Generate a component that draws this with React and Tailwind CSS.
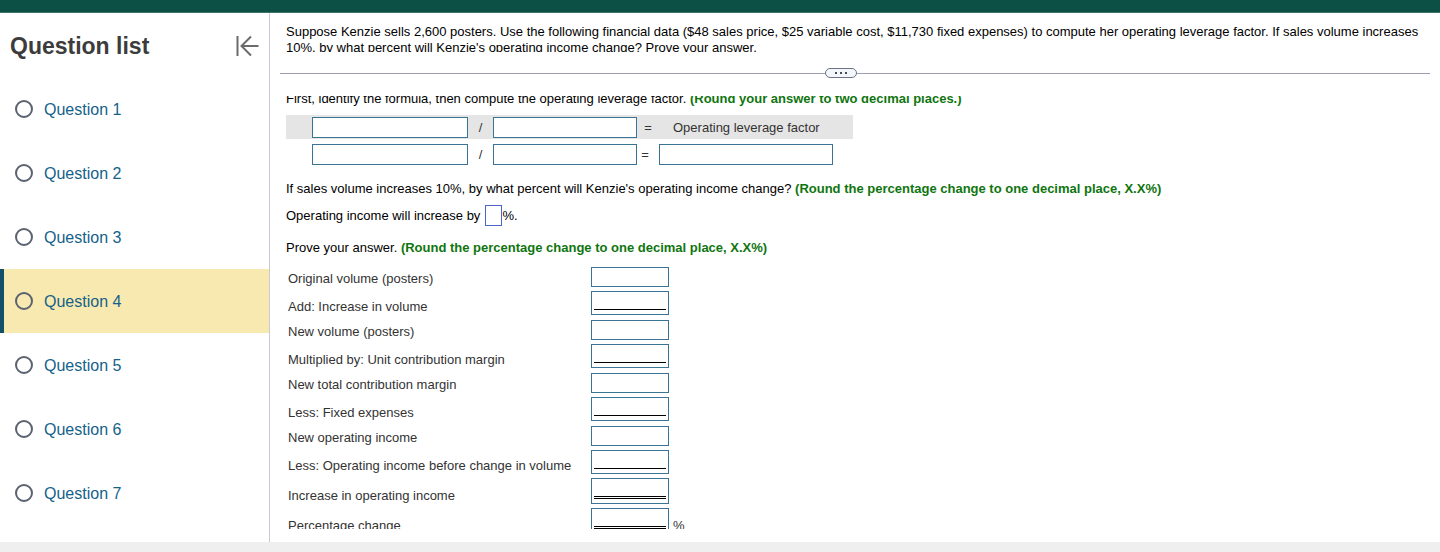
import { useState } from "react";

const questions = [1, 2, 3, 4, 5, 6, 7];

// line: "single" and "double" are the accounting rules under a total
const proofRows = [
    { id: "original", label: "Original volume (posters)" },
    { id: "increase", label: "Add: Increase in volume", line: "single" },
    { id: "new-volume", label: "New volume (posters)" },
    { id: "unit-margin", label: "Multiplied by: Unit contribution margin", line: "single" },
    { id: "total-margin", label: "New total contribution margin" },
    { id: "fixed", label: "Less: Fixed expenses", line: "single" },
    { id: "new-income", label: "New operating income" },
    { id: "old-income", label: "Less: Operating income before change in volume", line: "single" },
    { id: "income-change", label: "Increase in operating income", line: "double" },
    { id: "percent-change", label: "Percentage change", line: "double", unit: "%" },
];

const rowStyles = {
    none: { row: "h-6", label: "pt-1", cell: "pt-[2px]", box: "h-5", input: "" },
    single: { row: "h-[29px]", label: "pt-[6px]", cell: "pt-[2px]", box: "h-6", input: "border-b border-black" },
    double: { row: "h-[30px]", label: "pt-2", cell: "pt-px", box: "h-[26px]", input: "border-b-3 border-double border-black" },
};

const FormulaInput = ({ label, width }) => (
    <input
        type="text"
        aria-label={label}
        className={`block h-[21px] border border-[#3a7596] bg-white px-1 outline-none ${width}`}
    />
);

const Hint = ({ children }) => <strong className="font-bold text-[#0f750f]">{children}</strong>;

const ProofRow = ({ id, label, line = "none", unit }) => {
    const s = rowStyles[line];
    return (
        <tr className={s.row}>
            <th scope="row" className={`w-[303px] text-left font-normal ${s.label}`}>
                <label htmlFor={id}>{label}</label>
            </th>
            <td className={`w-[78px] align-top ${s.cell}`}>
                <div className={`flex border border-[#3a7596] bg-white px-[2px] pb-1 ${s.box}`}>
                    <input id={id} type="text" className={`w-full min-w-0 outline-none ${s.input}`} />
                </div>
            </td>
            <td className={`pl-1 ${s.label}`}>{unit}</td>
        </tr>
    );
};

const Sidebar = ({ active, onSelect }) => (
    <nav className="w-[270px] shrink-0 border-r border-[#c9c9d6]">
        <div className="flex h-16 items-center justify-between pl-[10px] pr-[10px]">
            <h1 className="pt-[2px] text-[23px] font-bold text-[#3c3c3c]">Question list</h1>
            <button type="button" aria-label="Collapse question list">
                <svg className="h-6 w-6 text-[#6b6b6b]" viewBox="0 0 24 24" fill="none" stroke="currentColor" strokeWidth="2">
                    <path d="M2.500 3v20M23.500 13H6M16 3.500L6.500 13l9.500 9.500" />
                </svg>
            </button>
        </div>
        <ul>
            {questions.map((n) => (
                <li key={n}>
                    <a
                        href={`#question-${n}`}
                        onClick={() => onSelect(n)}
                        className={`flex h-16 items-center gap-[11px] border-l-4 pl-[11px] text-base text-[#14628a] ${
                            n === active ? "border-[#12506a] bg-[#f8e9b0]" : "border-transparent"
                        }`}
                    >
                        <span className="size-[18px] rounded-full border-2 border-[#5a6170]" />
                        <span className="pt-[2px]">Question {n}</span>
                    </a>
                </li>
            ))}
        </ul>
    </nav>
);

const App = () => {
    const [active, setActive] = useState(4);

    return (
        <div className="flex h-screen flex-col bg-white font-['Liberation_Sans',Arial,sans-serif] text-[13px] leading-4 text-black">
            <header className="h-[13px] shrink-0 border-b border-[#3f7469] bg-[#0c4f44]" />

            <div className="flex min-h-0 flex-1 overflow-hidden">
                <Sidebar active={active} onSelect={setActive} />

                <main className="flex min-w-0 flex-1 flex-col pb-[13px] pl-[10px] pr-[10px]">
                    {/* problem statement, cut off by the splitter */}
                    <div className="max-h-[39px] shrink-0 overflow-hidden pl-[6px] pt-[11px]">
                        <p>
                            Suppose Kenzie sells 2,600 posters. Use the following financial data ($48 sales price, $25 variable cost, $11,730 fixed
                            expenses) to compute her operating leverage factor. If sales volume increases 10%, by what percent will Kenzie's
                            operating income change? Prove your answer.
                        </p>
                    </div>

                    {/* splitter */}
                    <div className="mb-[18px] mt-4 flex shrink-0 items-center">
                        <div className="h-px flex-[95] bg-[#9c9cb4]" />
                        <button
                            type="button"
                            aria-label="Resize panes"
                            className="flex h-[10px] w-8 items-center justify-center gap-[3px] rounded-full border border-[#6b7384] bg-[#f3f6fa]"
                        >
                            <span className="size-[2px] bg-[#444b5a]" />
                            <span className="size-[2px] bg-[#444b5a]" />
                            <span className="size-[2px] bg-[#444b5a]" />
                        </button>
                        <div className="h-px flex-[100] bg-[#9c9cb4]" />
                    </div>

                    {/* answer pane */}
                    <div className="min-h-0 flex-1 overflow-hidden pl-[6px]">
                        <p className="-mt-[5px] mb-2">
                            First, identify the formula, then compute the operating leverage factor.{" "}
                            <Hint>(Round your answer to two decimal places.)</Hint>
                        </p>

                        <table className="border-collapse text-[#333]">
                            <tbody>
                                <tr className="h-6 bg-[#e5e5e5]">
                                    <td className="pl-[26px]">
                                        <FormulaInput label="Formula numerator" width="w-[156px]" />
                                    </td>
                                    <td className="w-[25px] pt-[2px] text-center">/</td>
                                    <td>
                                        <FormulaInput label="Formula denominator" width="w-36" />
                                    </td>
                                    <td className="w-[22px] pt-[2px] text-center">=</td>
                                    <td className="w-[194px] pl-[14px] pt-[2px]">Operating leverage factor</td>
                                </tr>
                                <tr className="h-[30px]">
                                    <td className="pl-[26px]">
                                        <FormulaInput label="Numerator amount" width="w-[156px]" />
                                    </td>
                                    <td className="pt-[2px] text-center">/</td>
                                    <td>
                                        <FormulaInput label="Denominator amount" width="w-36" />
                                    </td>
                                    <td className="pr-[6px] pt-[2px] text-center">=</td>
                                    <td>
                                        <FormulaInput label="Operating leverage factor" width="w-[174px]" />
                                    </td>
                                </tr>
                            </tbody>
                        </table>

                        <p className="mt-3">
                            If sales volume increases 10%, by what percent will Kenzie's operating income change?{" "}
                            <Hint>(Round the percentage change to one decimal place, X.X%)</Hint>
                        </p>

                        <label className="mt-2 flex items-center">
                            Operating income will increase by
                            <input type="text" className="ml-[5px] h-[21px] w-[17px] border border-[#4a64c8] outline-none" />
                            %.
                        </label>

                        <p className="mt-[14px]">
                            Prove your answer. <Hint>(Round the percentage change to one decimal place, X.X%)</Hint>
                        </p>

                        <table className="ml-[2px] mt-[9px] border-collapse text-[#333]">
                            <tbody>
                                {proofRows.map((row) => (
                                    <ProofRow key={row.id} {...row} />
                                ))}
                            </tbody>
                        </table>
                    </div>
                </main>
            </div>

            <footer className="h-[10px] shrink-0 bg-[#efefef]" />
        </div>
    );
};

export default App;
